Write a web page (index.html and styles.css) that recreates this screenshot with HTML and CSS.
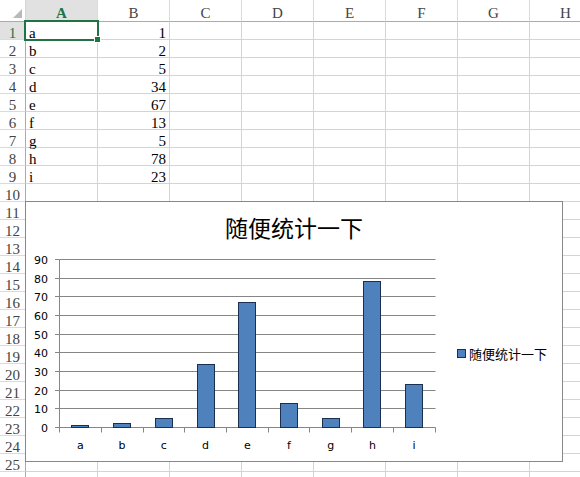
FILE: index.html
```html
<!DOCTYPE html>
<html lang="zh-CN">
<head>
<meta charset="utf-8">
<title>Sheet</title>
<link rel="stylesheet" href="styles.css">
</head>
<body>
<div class="wrap">
  <div class="sheet">
    <div class="corner"><span class="tri"></span></div>
    <div class="ch sel">A</div><div class="ch">B</div><div class="ch">C</div><div class="ch">D</div><div class="ch">E</div><div class="ch">F</div><div class="ch">G</div><div class="ch">H</div>

    <div class="rh sel">1</div><div>a</div><div class="num">1</div><div></div><div></div><div></div><div></div><div></div><div></div>
    <div class="rh">2</div><div>b</div><div class="num">2</div><div></div><div></div><div></div><div></div><div></div><div></div>
    <div class="rh">3</div><div>c</div><div class="num">5</div><div></div><div></div><div></div><div></div><div></div><div></div>
    <div class="rh">4</div><div>d</div><div class="num">34</div><div></div><div></div><div></div><div></div><div></div><div></div>
    <div class="rh">5</div><div>e</div><div class="num">67</div><div></div><div></div><div></div><div></div><div></div><div></div>
    <div class="rh">6</div><div>f</div><div class="num">13</div><div></div><div></div><div></div><div></div><div></div><div></div>
    <div class="rh">7</div><div>g</div><div class="num">5</div><div></div><div></div><div></div><div></div><div></div><div></div>
    <div class="rh">8</div><div>h</div><div class="num">78</div><div></div><div></div><div></div><div></div><div></div><div></div>
    <div class="rh">9</div><div>i</div><div class="num">23</div><div></div><div></div><div></div><div></div><div></div><div></div>
    <div class="rh">10</div><div></div><div></div><div></div><div></div><div></div><div></div><div></div><div></div>
    <div class="rh">11</div><div></div><div></div><div></div><div></div><div></div><div></div><div></div><div></div>
    <div class="rh">12</div><div></div><div></div><div></div><div></div><div></div><div></div><div></div><div></div>
    <div class="rh">13</div><div></div><div></div><div></div><div></div><div></div><div></div><div></div><div></div>
    <div class="rh">14</div><div></div><div></div><div></div><div></div><div></div><div></div><div></div><div></div>
    <div class="rh">15</div><div></div><div></div><div></div><div></div><div></div><div></div><div></div><div></div>
    <div class="rh">16</div><div></div><div></div><div></div><div></div><div></div><div></div><div></div><div></div>
    <div class="rh">17</div><div></div><div></div><div></div><div></div><div></div><div></div><div></div><div></div>
    <div class="rh">18</div><div></div><div></div><div></div><div></div><div></div><div></div><div></div><div></div>
    <div class="rh">19</div><div></div><div></div><div></div><div></div><div></div><div></div><div></div><div></div>
    <div class="rh">20</div><div></div><div></div><div></div><div></div><div></div><div></div><div></div><div></div>
    <div class="rh">21</div><div></div><div></div><div></div><div></div><div></div><div></div><div></div><div></div>
    <div class="rh">22</div><div></div><div></div><div></div><div></div><div></div><div></div><div></div><div></div>
    <div class="rh">23</div><div></div><div></div><div></div><div></div><div></div><div></div><div></div><div></div>
    <div class="rh">24</div><div></div><div></div><div></div><div></div><div></div><div></div><div></div><div></div>
    <div class="rh">25</div><div></div><div></div><div></div><div></div><div></div><div></div><div></div><div></div>
    <div class="rh"></div><div></div><div></div><div></div><div></div><div></div><div></div><div></div><div></div>
  </div>

  <div class="selbox"></div>
  <div class="handle"></div>

  <div class="chart">
    <div class="title">随便统计一下</div>
    <div class="plotrow">
      <svg class="plot" width="420" height="205" viewBox="0 0 420 205" xmlns="http://www.w3.org/2000/svg">
        <g stroke="#868686" stroke-width="1" fill="none">
          <path d="M33.5 8.5H409.5M33.5 27.5H409.5M33.5 45.5H409.5M33.5 64.5H409.5M33.5 83.5H409.5M33.5 101.5H409.5M33.5 120.5H409.5M33.5 139.5H409.5M33.5 157.5H409.5M33.5 176.5H409.5"/>
          <path d="M29 8.5H33.5M29 27.5H33.5M29 45.5H33.5M29 64.5H33.5M29 83.5H33.5M29 101.5H33.5M29 120.5H33.5M29 139.5H33.5M29 157.5H33.5M29 176.5H33.5"/>
          <path d="M33.5 8.5V181.5M75.5 176.5V181.5M117.5 176.5V181.5M158.5 176.5V181.5M200.5 176.5V181.5M242.5 176.5V181.5M283.5 176.5V181.5M325.5 176.5V181.5M367.5 176.5V181.5M409.5 176.5V181.5"/>
        </g>
        <g fill="#4f81bd" stroke="#1b2f50" stroke-width="1">
          <rect x="45.5" y="174.5" width="17" height="2"/>
          <rect x="87.5" y="172.5" width="17" height="4"/>
          <rect x="129.5" y="167.5" width="17" height="9"/>
          <rect x="171.5" y="113.5" width="17" height="63"/>
          <rect x="212.5" y="51.5" width="17" height="125"/>
          <rect x="254.5" y="152.5" width="17" height="24"/>
          <rect x="296.5" y="167.5" width="17" height="9"/>
          <rect x="337.5" y="30.5" width="17" height="146"/>
          <rect x="379.5" y="133.5" width="17" height="43"/>
        </g>
        <g class="ylab" text-anchor="end">
          <text x="22" y="12.5">90</text>
          <text x="22" y="31.5">80</text>
          <text x="22" y="49.5">70</text>
          <text x="22" y="68.5">60</text>
          <text x="22" y="87.5">50</text>
          <text x="22" y="105.5">40</text>
          <text x="22" y="124.5">30</text>
          <text x="22" y="143.5">20</text>
          <text x="22" y="161.5">10</text>
          <text x="22" y="180.5">0</text>
        </g>
        <g class="xlab" text-anchor="middle">
          <text x="54.4" y="198">a</text>
          <text x="96.1" y="198">b</text>
          <text x="137.8" y="198">c</text>
          <text x="179.5" y="198">d</text>
          <text x="221.3" y="198">e</text>
          <text x="263" y="198">f</text>
          <text x="304.7" y="198">g</text>
          <text x="346.4" y="198">h</text>
          <text x="388.1" y="198">i</text>
        </g>
      </svg>
      <div class="legend"><span class="swatch"></span><span class="ltext">随便统计一下</span></div>
    </div>
  </div>
</div>
</body>
</html>
```
FILE: styles.css
```css
html, body {
  margin: 0;
  padding: 0;
  background: #ffffff;
  overflow: hidden;
}
.wrap {
  position: relative;
  width: 580px;
  height: 477px;
  overflow: hidden;
}
.sheet {
  display: grid;
  grid-template-columns: 26px repeat(8, 72px);
  grid-template-rows: 22px;
  grid-auto-rows: 18px;
  width: 602px;
}
.sheet > div {
  box-sizing: border-box;
  border-right: 1px solid #d4d4d4;
  border-bottom: 1px solid #d4d4d4;
  font-family: "Liberation Serif", "DejaVu Serif", serif;
  font-size: 15px;
  line-height: 18px;
  padding: 2px 3px 0;
  color: #000;
  white-space: nowrap;
}
.sheet > .num {
  text-align: right;
  padding-right: 3px;
}
.sheet > .corner {
  display: flex;
  justify-content: flex-end;
  align-items: flex-end;
  padding: 0 3px 3px 0;
  border-bottom-color: #ababab;
  border-right-color: #d4d4d4;
}
.tri {
  width: 0;
  height: 0;
  border-left: 9px solid transparent;
  border-bottom: 9px solid #b9b9b9;
}
.sheet > .ch {
  text-align: center;
  color: #444;
  font-size: 15px;
  line-height: 17px;
  padding: 5px 0 0;
  border-bottom-color: #ababab;
  border-right-color: #dadada;
}
.sheet > .ch.sel {
  background: #e1e1e1;
  color: #217346;
  font-weight: bold;
  border-bottom: 2px solid #217346;
}
.sheet > .rh {
  text-align: center;
  color: #444;
  font-size: 15px;
  padding: 2px 0 0;
  border-right-color: #ababab;
  border-bottom-color: #dadada;
}
.sheet > .rh.sel {
  background: #e1e1e1;
  color: #217346;
}
.selbox {
  position: absolute;
  left: 24px;
  top: 20px;
  width: 75px;
  height: 21px;
  box-sizing: border-box;
  border: 2px solid #217346;
}
.handle {
  position: absolute;
  left: 94px;
  top: 36px;
  width: 5px;
  height: 5px;
  background: #217346;
  border: 1px solid #ffffff;
}
.chart {
  position: absolute;
  left: 25px;
  top: 201px;
  width: 538px;
  height: 261px;
  box-sizing: border-box;
  border: 1px solid #888888;
  background: #ffffff;
}
.title {
  height: 49px;
  box-sizing: border-box;
  padding-top: 13px;
  text-align: center;
  font-family: "Noto Sans CJK SC", sans-serif;
  font-size: 23px;
  line-height: 24px;
  color: #000;
}
.plotrow {
  display: flex;
  align-items: center;
  height: 205px;
}
.plot {
  display: block;
  flex: none;
}
.ylab, .xlab {
  font-family: "DejaVu Sans", sans-serif;
  font-size: 11px;
  fill: #000;
}
.legend {
  display: flex;
  align-items: center;
  margin-left: 11px;
  gap: 3px;
}
.swatch {
  width: 7px;
  height: 7px;
  background: #4f81bd;
  border: 1px solid #1b2f50;
}
.ltext {
  font-family: "Noto Sans CJK SC", sans-serif;
  font-size: 13px;
  line-height: 16px;
  color: #000;
}
```
